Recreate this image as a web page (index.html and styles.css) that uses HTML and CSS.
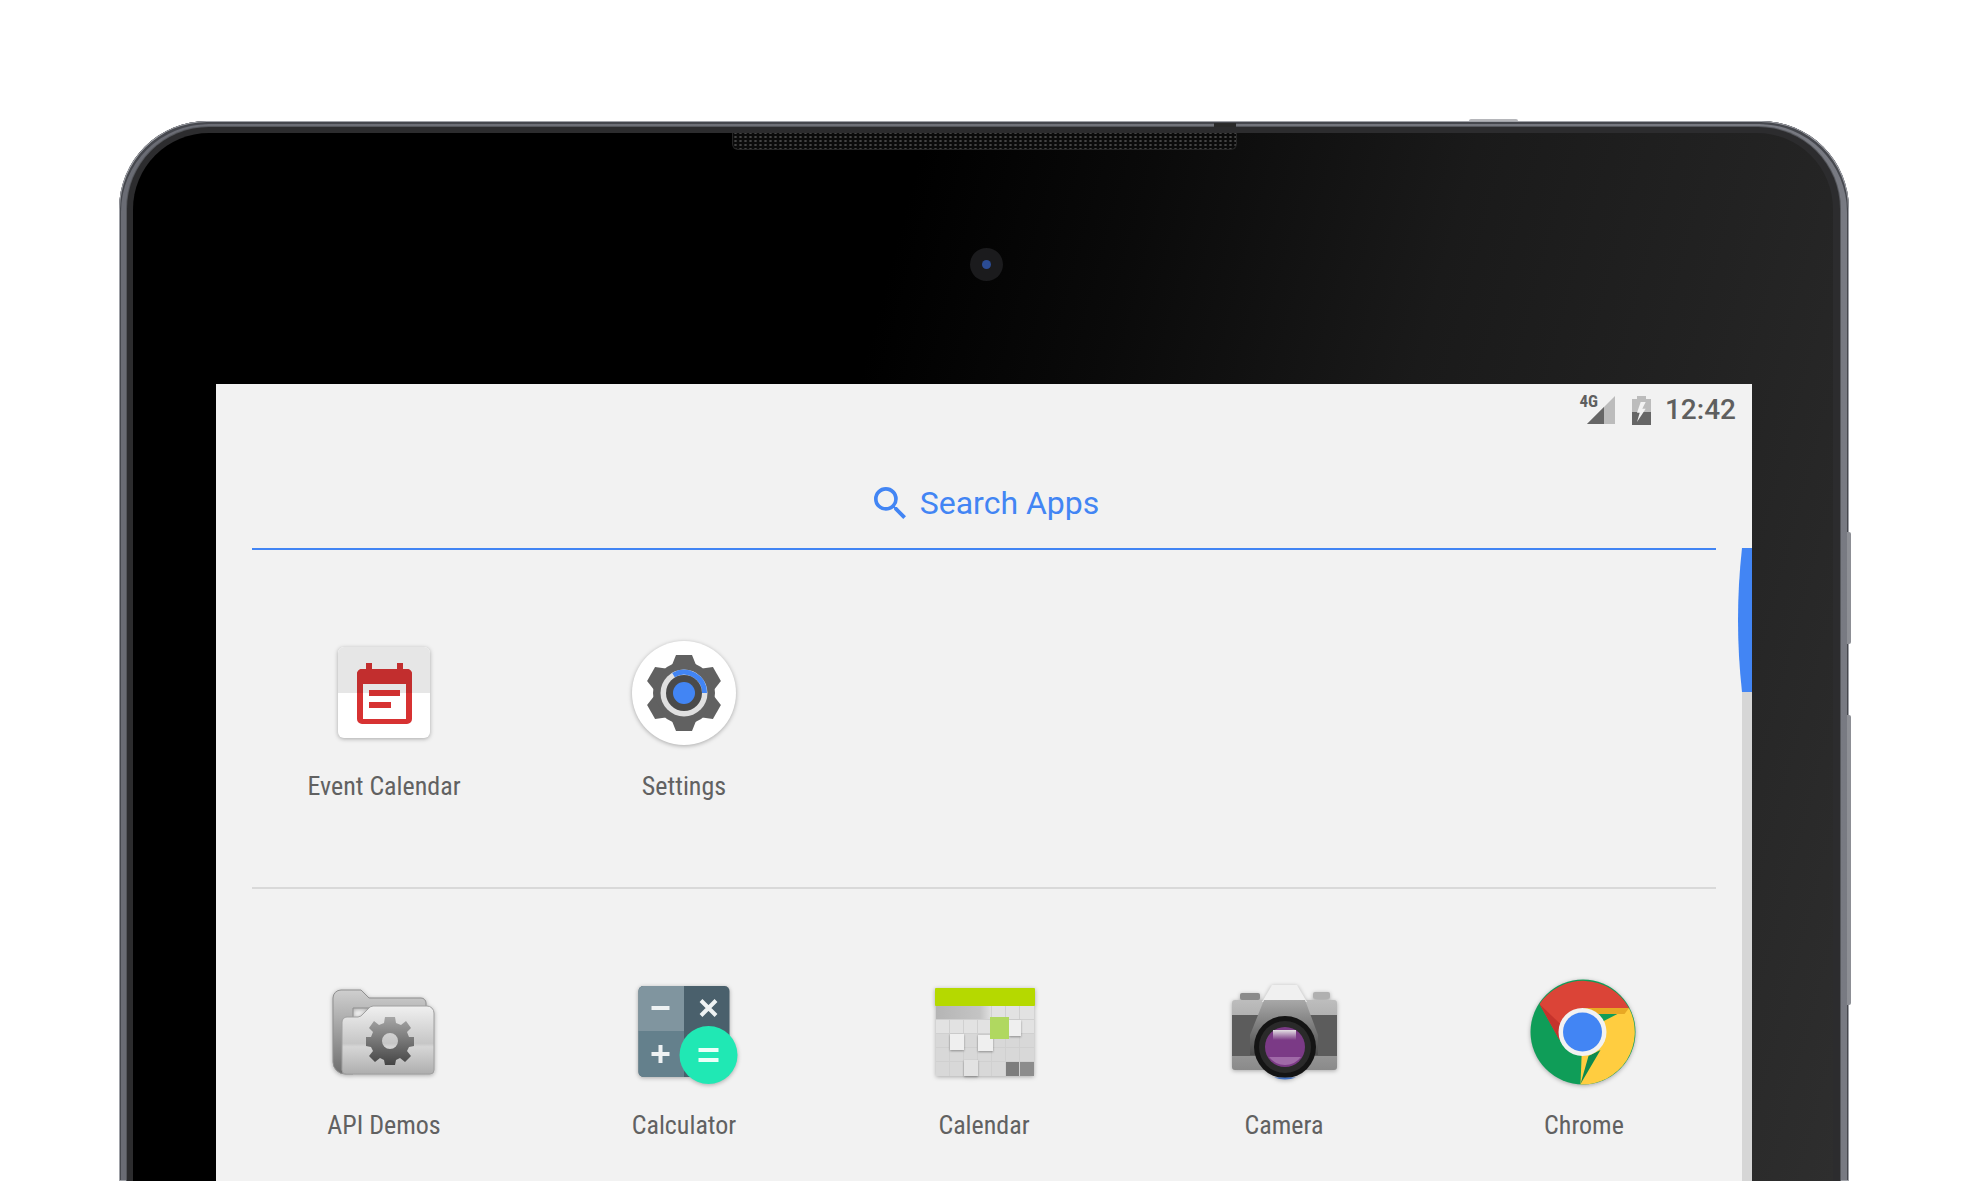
FILE: index.html
```html
<!DOCTYPE html>
<html>
<head>
	<title>Search Apps</title>
	<link rel="stylesheet" href="styles.css">
</head>
<body>
	<div class="device">
		<span class="btn-top"></span>
		<span class="btn-side btn-one"></span>
		<span class="btn-side btn-two"></span>
		<span class="notch"></span>
		<div class="edge">
			<div class="bezel">
				<div class="speaker"></div>
				<div class="camera"><span class="lens"></span></div>
				<div class="screen">
					<div class="status">
						<span class="net">4G</span>
						<svg class="signal" viewBox="0 0 28 28"><polygon points="28,0 28,28 0,28" fill="#bcbcbc"/><polygon points="17,11 17,28 0,28" fill="#666"/></svg>
						<svg class="battery" viewBox="0 0 19 29">
							<path d="M5 0h9v3h5v26H0V3h5z" fill="#bcbcbc"/>
							<rect y="16" width="19" height="13" fill="#666"/>
							<polygon points="8.7,6 5,16.7 7.7,16.7 5,26 13.7,12.7 10.3,12.7 13.7,6" fill="#f2f2f2"/>
						</svg>
						<span class="time">12:42</span>
					</div>
					<div class="search">
						<svg class="search-icon" viewBox="3 3 17.5 17.5"><path d="M15.5 14h-.79l-.28-.27A6.471 6.471 0 0 0 16 9.5 6.5 6.5 0 1 0 9.5 16c1.61 0 3.09-.59 4.23-1.57l.27.28v.79l5 4.99L20.49 19l-4.99-5zm-6 0C7.01 14 5 11.99 5 9.5S7.01 5 9.5 5 14 7.01 14 9.5 11.99 14 9.5 14z" fill="#4285f4"/></svg>
						<span>Search Apps</span>
					</div>

					<div class="apps">
						<div class="app">
							<div class="icon">
								<svg width="92" height="92" viewBox="0 0 92 92">
									<rect width="92" height="91" rx="6" fill="#fff"/>
									<path d="M0 46V6a6 6 0 0 1 6-6h80a6 6 0 0 1 6 6v40z" fill="#e6e6e6"/>
									<path d="M28 22v-6h6v6h25v-6h6v6h4a5 5 0 0 1 5 5v45a5 5 0 0 1-5 5H24a5 5 0 0 1-5-5V27a5 5 0 0 1 5-5z" fill="#d73232"/>
									<path d="M19 46V27a5 5 0 0 1 5-5h4v-6h6v6h25v-6h6v6h4a5 5 0 0 1 5 5v19z" fill="#c22e2e"/>
									<rect x="25" y="37" width="43" height="35" fill="#fff"/>
									<rect x="25" y="37" width="43" height="9" fill="#e6e6e6"/>
									<rect x="31" y="43" width="31" height="6" fill="#d03030"/>
									<rect x="31" y="55" width="22" height="6" fill="#d73232"/>
								</svg>
							</div>
							<span class="label">Event Calendar</span>
						</div>
						<div class="app">
							<div class="icon">
								<svg width="104" height="104" viewBox="0 0 104 104">
									<circle cx="52" cy="52" r="52" fill="#fff"/>
									<g transform="translate(52 52)" fill="#616161">
										<circle r="31"/>
										<path d="M-12-28L-8-38H8L12-28z"/>
										<path d="M-12-28L-8-38H8L12-28z" transform="rotate(60)"/>
										<path d="M-12-28L-8-38H8L12-28z" transform="rotate(120)"/>
										<path d="M-12-28L-8-38H8L12-28z" transform="rotate(180)"/>
										<path d="M-12-28L-8-38H8L12-28z" transform="rotate(240)"/>
										<path d="M-12-28L-8-38H8L12-28z" transform="rotate(300)"/>
										<circle r="23.5" fill="#e0e0e0"/>
										<path d="M-10.5-17.8A20.5 20.5 0 0 1 20.5 0" fill="none" stroke="#4285f4" stroke-width="5"/>
										<circle r="18" fill="#4a4a4a"/>
										<circle r="11" fill="#4285f4"/>
									</g>
								</svg>
							</div>
							<span class="label">Settings</span>
						</div>
					</div>

					<div class="apps apps-all">
						<div class="app">
							<div class="icon">
								<svg width="102" height="84" viewBox="0 0 102 84">
									<defs>
										<linearGradient id="fback" x1="0" y1="0" x2="0" y2="1"><stop offset="0" stop-color="#cfcfcf"/><stop offset="1" stop-color="#6e6e6e"/></linearGradient>
										<linearGradient id="ffront" x1="0" y1="0" x2="0" y2="1"><stop offset="0" stop-color="#f0f0f0"/><stop offset=".55" stop-color="#c6c6c6"/><stop offset=".6" stop-color="#d6d6d6"/><stop offset="1" stop-color="#aeaeae"/></linearGradient>
										<linearGradient id="fgear" x1="0" y1="0" x2="0" y2="1"><stop offset="0" stop-color="#a6a6a6"/><stop offset="1" stop-color="#454545"/></linearGradient>
									</defs>
									<path d="M0 8a8 8 0 0 1 8-8h20l8 8h52a5 5 0 0 1 5 5v5H20v66h-8a12 12 0 0 1-12-12z" fill="url(#fback)" stroke="#8f8f8f"/>
									<path d="M9 32a5 5 0 0 1 5-5h11a7 7 0 0 0 5-3l5-5a7 7 0 0 1 5-3h54a7 7 0 0 1 7 7v57a4 4 0 0 1-4 4H13a4 4 0 0 1-4-4z" fill="url(#ffront)" stroke="#a0a0a0"/>
									<g transform="translate(57 51)" fill="url(#fgear)">
										<path d="M-5-24H5L6-18 11-16 16-20 21-13 17-9 19-4 24-4V5L19 6 17 10 21 15 15 21 10 17 6 19 5 24H-5L-6 19-10 17-15 21-21 15-17 10-19 6-24 5V-4L-19-4-17-9-21-13-16-20-11-16-6-18zM8 0A8 8 0 1 0-8 0 8 8 0 1 0 8 0z" fill-rule="evenodd"/>
									</g>
								</svg>
							</div>
							<span class="label">API Demos</span>
						</div>
						<div class="app">
							<div class="icon">
								<svg width="108" height="104" viewBox="-8.5 -6 108 104">
									<rect width="91" height="91" rx="5" fill="#4a606c"/>
									<path d="M45.5 0H5a5 5 0 0 0-5 5v40.5h45.5z" fill="#80959f"/>
									<path d="M45.5 45H0v41a5 5 0 0 0 5 5h40.5z" fill="#64808c"/>
									<rect x="13" y="20" width="18" height="4" fill="#eef2f3"/>
									<path d="M62.5 14.500l15 15M77.5 14.500l-15 15" stroke="#eef2f3" stroke-width="4"/>
									<path d="M13 68h18M22 59v18" stroke="#eef2f3" stroke-width="4"/>
									<circle cx="70" cy="69" r="29" fill="#20e8b4"/>
									<rect x="60" y="62" width="20" height="4" fill="#eafff8"/>
									<rect x="60" y="72" width="20" height="4" fill="#eafff8"/>
								</svg>
							</div>
							<span class="label">Calculator</span>
						</div>
						<div class="app">
							<div class="icon">
								<svg width="100" height="88" viewBox="-1 0 100 88">
									<defs>
										<linearGradient id="cdark" x1="0" y1="0" x2="1" y2="0"><stop offset="0" stop-color="#b5b5b5"/><stop offset=".8" stop-color="#c4c4c4"/><stop offset="1" stop-color="#e0e0e0"/></linearGradient>
									</defs>
									<rect x="1" y="17" width="98" height="71" fill="#d0d0d0"/>
									<rect width="100" height="18" rx="1" fill="#b5d900"/>
									<rect x="1" y="18" width="55" height="13" fill="url(#cdark)"/>
									<g fill="#e2e2e2">
										<rect x="57" y="18" width="13" height="13"/><rect x="71" y="18" width="13" height="13"/><rect x="85" y="18" width="14" height="13"/>
										<rect x="1" y="32" width="13" height="13"/><rect x="15" y="32" width="13" height="13"/><rect x="29" y="32" width="13" height="13"/><rect x="43" y="32" width="13" height="13"/>
										<rect x="85" y="32" width="14" height="13"/>
									</g>
									<g fill="#d8d8d8">
										<rect x="1" y="46" width="13" height="13"/><rect x="29" y="46" width="13" height="13"/><rect x="57" y="46" width="13" height="13"/><rect x="71" y="46" width="13" height="13"/><rect x="85" y="46" width="14" height="13"/>
										<rect x="1" y="60" width="13" height="13"/><rect x="15" y="60" width="13" height="13"/><rect x="29" y="60" width="13" height="13"/><rect x="43" y="60" width="13" height="13"/><rect x="57" y="60" width="13" height="13"/><rect x="71" y="60" width="13" height="13"/><rect x="85" y="60" width="14" height="13"/>
										<rect x="1" y="74" width="13" height="14"/><rect x="15" y="74" width="13" height="14"/><rect x="43" y="74" width="13" height="14"/><rect x="57" y="74" width="13" height="14"/>
									</g>
									<rect x="71" y="74" width="13" height="14" fill="#7d7d7d"/>
									<rect x="85" y="74" width="14" height="14" fill="#8c8c8c"/>
									<g class="pop" fill="#efefef">
										<rect x="74" y="32" width="12" height="16"/>
										<rect x="15" y="46" width="14" height="16"/>
										<rect x="43" y="47" width="15" height="16"/>
										<rect x="29" y="72" width="14" height="16" fill="#e2e2e2"/>
									</g>
									<rect x="55" y="29" width="19" height="22" fill="#b0d860"/>
								</svg>
							</div>
							<span class="label">Calendar</span>
						</div>
						<div class="app">
							<div class="icon">
								<svg width="105" height="94" viewBox="0 0 105 94">
									<defs>
										<linearGradient id="cbody" x1="0" y1="0" x2="0" y2="1"><stop offset="0" stop-color="#bdbdbd"/><stop offset="1" stop-color="#8a8a8a"/></linearGradient>
										<linearGradient id="chood" x1="0" y1="0" x2="0" y2="1"><stop offset="0" stop-color="#a8a8a8"/><stop offset="1" stop-color="#4c4c4c"/></linearGradient>
										<linearGradient id="cglare" x1="0" y1="0" x2="0" y2="1"><stop offset="0" stop-color="#e4e0e4"/><stop offset="1" stop-color="#7b3a86"/></linearGradient>
									</defs>
									<rect x="8" y="8" width="20" height="7" rx="2" fill="#8a8a8a"/>
									<rect x="81" y="7" width="17" height="7" rx="2" fill="#b0b0b0"/>
									<rect y="15" width="105" height="70" rx="3" fill="url(#cbody)"/>
									<rect y="30" width="105" height="41" fill="#5c5c5c"/>
									<polygon points="40,0 65,0 75,17 30,17" fill="#f0f0f0"/>
									<polygon points="32,15 73,15 86,50 86,70 18,70 18,50" fill="url(#chood)"/>
									<circle cx="53" cy="62" r="31" fill="#141414"/>
									<circle cx="53" cy="62" r="26" fill="#2a2a2a"/>
									<circle cx="53" cy="62" r="20" fill="#7b3a86"/>
									<rect x="41" y="45" width="23" height="10" fill="url(#cglare)"/>
									<path d="M37 72a20 20 0 0 0 32 0z" fill="#a06aa8"/>
									<path d="M42 92.500a31 31 0 0 0 22 0z" fill="#3f6fc0"/>
								</svg>
							</div>
							<span class="label">Camera</span>
						</div>
						<div class="app">
							<div class="icon">
								<svg width="105" height="104" viewBox="1.5 0 105 104">
									<circle cx="52.5" cy="52" r="52.5" fill="#0f9d58"/>
									<path d="M52 52L98.5 28A52.5 52.5 0 0 1 50 104.5z" fill="#ffcd40"/>
									<path d="M9 24A52.5 52.5 0 0 1 98.5 28H52L29 60z" fill="#db4437"/>
									<path d="M9 24L29 60 34 48z" fill="#c5332c"/>
									<path d="M52 28H98.5L94 34H66z" fill="#e8a824"/>
									<path d="M50 104L70 70 58 76z" fill="#0d8a4e"/>
									<circle cx="52" cy="52" r="24" fill="#f2f2f2"/>
									<circle cx="52" cy="52" r="19.5" fill="#4285f4"/>
								</svg>
							</div>
							<span class="label">Chrome</span>
						</div>
					</div>

					<div class="track"></div>
					<svg class="thumb" viewBox="0 0 14 144"><path d="M4 0H14V144H4Q-4 72 4 0z" fill="#4285f4"/></svg>
				</div>
			</div>
		</div>
	</div>
</body>
</html>
```
FILE: styles.css
```css
*{
	margin: 0;
	padding: 0;
	box-sizing: border-box;
}

html,body{
	height: 1181px;
	overflow: hidden;
	background: #fff;
}

body{
	padding: 121px 0 0 119px;
	font-family: Roboto, "Liberation Sans", sans-serif;
}

/* device frame */
.device{
	position: relative;
	width: 1730px;
	height: 1060px;
	padding: 6px 9px 0 8px;
	border-radius: 88px 88px 0 0;
	background: linear-gradient(90deg, #6a6c74, #6f7178 50%, #787a82);
	box-shadow: inset 0 0 0 1px #a0a2a8, inset 2px 3px 0 #46484e, inset -2px 3px 0 #46484e;
}
.edge{
	height: 100%;
	padding: 6px 7px 0 6px;
	border-radius: 82px 82px 0 0;
	background: #2c2c2e;
	box-shadow: 0 0 0 1px #55575c;
}
.bezel{
	display: flex;
	flex-direction: column;
	align-items: center;
	height: 100%;
	padding: 0 81px 0 83px;
	border-radius: 76px 76px 0 0;
	background: linear-gradient(105deg, #000 40%, #0a0a0a 52%, #1a1a1a 68%, #222 82%, #2e2e2e 100%);
}
.btn-top{
	position: absolute;
	left: 1350px;
	top: -2px;
	width: 49px;
	height: 2px;
	border-radius: 2px 2px 0 0;
	background: #b5b6ba;
}
.btn-side{
	position: absolute;
	right: -2px;
	width: 4px;
	border-radius: 0 2px 2px 0;
	background: #8d8f95;
}
.btn-one{
	top: 411px;
	height: 112px;
}
.btn-two{
	top: 594px;
	height: 290px;
}
.notch{
	position: absolute;
	left: 1095px;
	top: 2px;
	width: 22px;
	height: 4px;
	background: #2a2a2a;
}
.speaker{
	flex: none;
	width: 505px;
	height: 17px;
	border: 1px solid #262626;
	border-top: 0;
	border-radius: 0 0 6px 6px;
	background-color: #0b0b0b;
	background-image: radial-gradient(#444 1px, transparent 1.5px);
	background-size: 5px 4px;
	background-position: 0 2px;
}
.camera{
	flex: none;
	display: flex;
	align-items: center;
	justify-content: center;
	width: 33px;
	height: 33px;
	margin: 98px 0 0 4px;
	border-radius: 50%;
	background: #1b1b1d;
}
.lens{
	width: 9px;
	height: 9px;
	border-radius: 50%;
	background: #2b4c94;
}

/* screen */
.screen{
	position: relative;
	flex: 1;
	width: 100%;
	margin-top: 103px;
	overflow: hidden;
	background: #f2f2f2;
}
.status{
	display: flex;
	align-items: center;
	justify-content: flex-end;
	height: 52px;
	padding-right: 16px;
	color: #5f5f5f;
}
.net{
	align-self: flex-start;
	margin: 9px -11px 0 0;
	font-size: 17px;
	font-weight: 700;
	font-stretch: 75%;
	line-height: 16px;
}
.signal{
	width: 28px;
	height: 28px;
	margin: 0 17px 0 0;
}
.battery{
	width: 19px;
	height: 29px;
	margin-right: 14px;
}
.time{
	font-size: 28px;
	font-weight: 500;
	line-height: 32px;
}
.search{
	display: flex;
	align-items: center;
	justify-content: center;
	gap: 14px;
	height: 114px;
	margin: 0 36px;
	padding: 22px 0 0 5px;
	border-bottom: 2px solid #4285f4;
	font-size: 32px;
	color: #4285f4;
}
.search-icon{
	width: 32px;
	height: 32px;
}
.apps{
	display: grid;
	grid-template-columns: repeat(5, 300px);
	margin: 0 18px;
	padding: 91px 0 88px;
	position: relative;
}
.apps-all{
	padding-bottom: 0;
}
.apps-all::before{
	content: "";
	position: absolute;
	left: 18px;
	right: 18px;
	top: -2px;
	height: 2px;
	background: #d9d9d9;
}
.app{
	display: flex;
	flex-direction: column;
	align-items: center;
}
.icon{
	display: flex;
	align-items: center;
	justify-content: center;
	height: 104px;
}
.icon svg{
	overflow: visible;
	filter: drop-shadow(0 1px 2px rgba(0,0,0,.3));
}
.pop{
	filter: drop-shadow(0 1px 1px rgba(0,0,0,.35));
}
.label{
	margin-top: 26px;
	font-size: 26px;
	font-stretch: 75%;
	line-height: 30px;
	color: #616161;
}
.track{
	position: absolute;
	top: 166px;
	right: 0;
	bottom: 0;
	width: 10px;
	background: #d6d6d6;
}
.thumb{
	position: absolute;
	top: 164px;
	right: 0;
	width: 14px;
	height: 144px;
}
```
